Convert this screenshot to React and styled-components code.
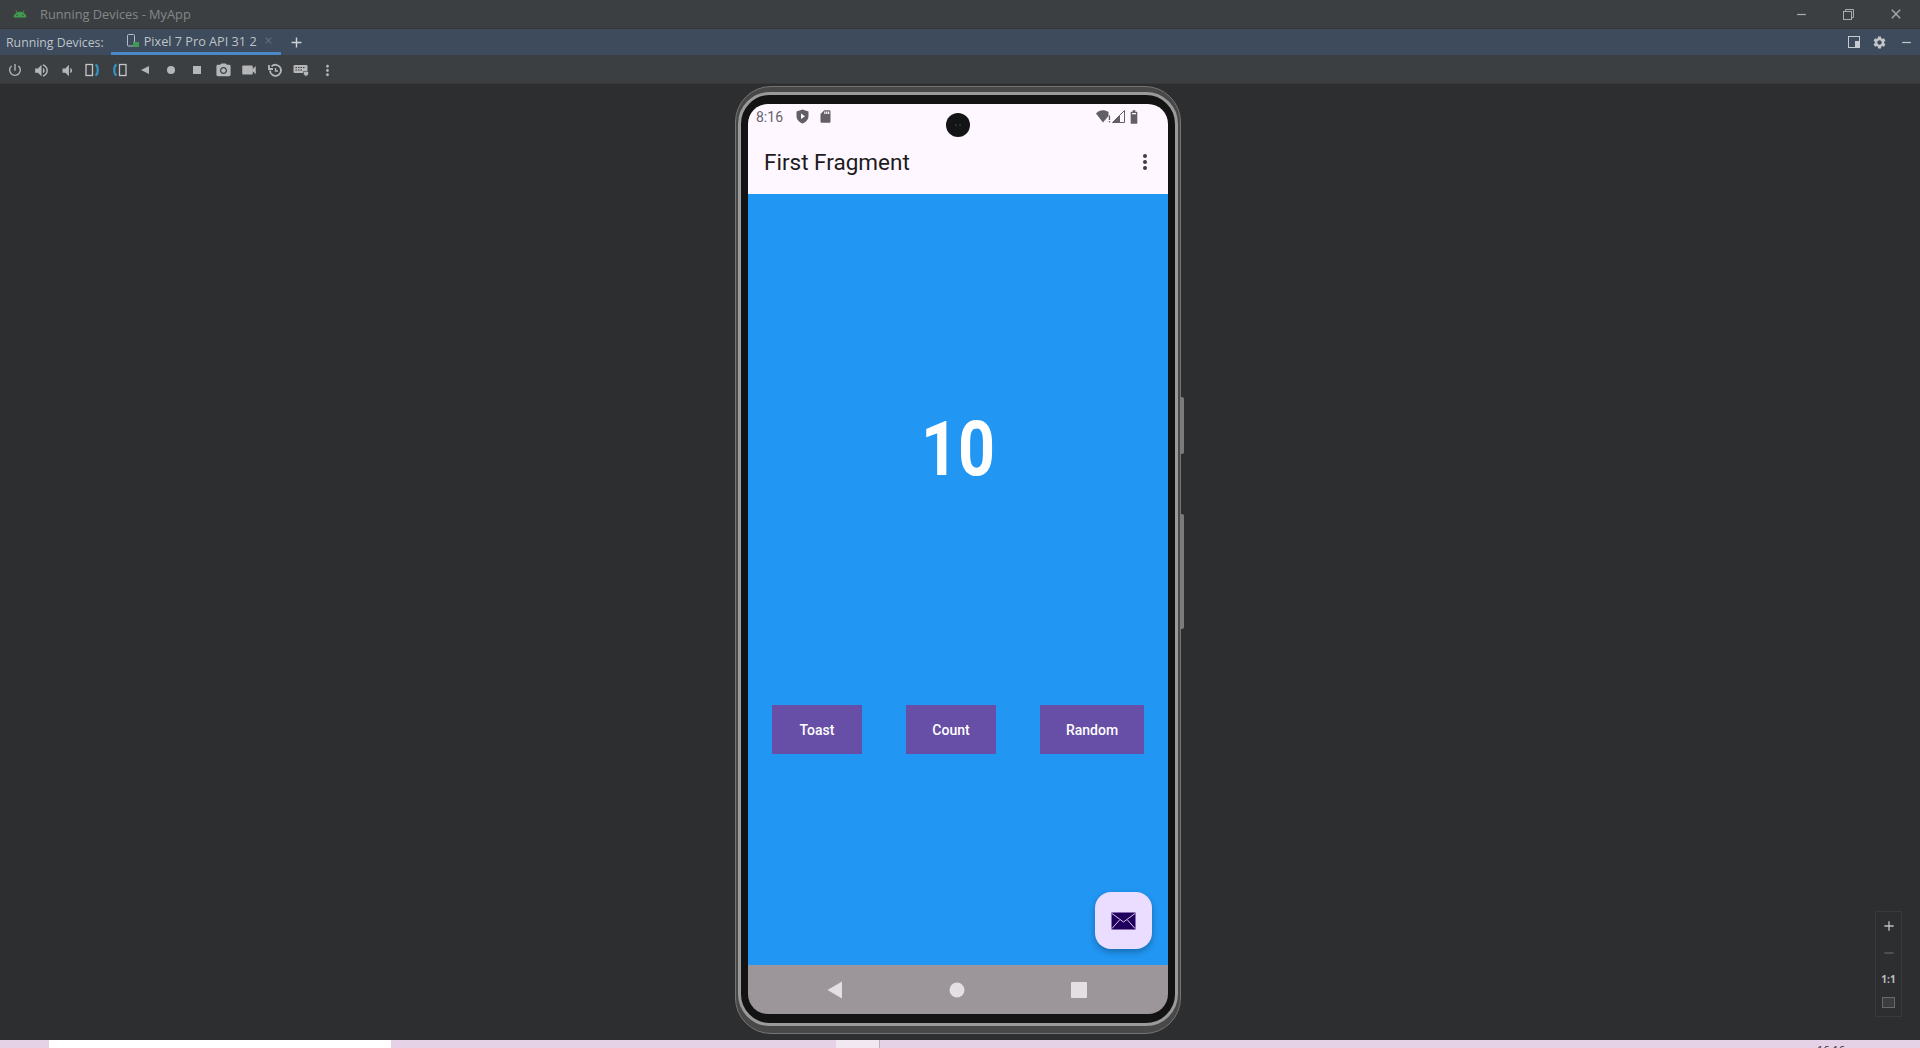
import React from 'react';
import styled, { createGlobalStyle } from 'styled-components';
import {
  MdPowerSettingsNew, MdVolumeUp, MdVolumeDown, MdPhotoCamera, MdVideocam, MdMoreVert,
  MdAndroid, MdAdd, MdSettings, MdClose, MdRemove, MdSdCard, MdBattery6Bar,
} from 'react-icons/md';

const GlobalStyle = createGlobalStyle`
  html, body { margin: 0; padding: 0; background: #2d2e2f; overflow: hidden; }
  * { box-sizing: border-box; }
`;

const Page = styled.div`
  width: 1920px;
  height: 1048px;
  display: flex;
  flex-direction: column;
  font-family: "Open Sans", "Liberation Sans", sans-serif;
  overflow: hidden;
`;

const TitleBar = styled.div`
  height: 29px;
  flex: none;
  display: flex;
  align-items: center;
  padding-left: 13px;
  background: #3c3f41;
  border-bottom: 1px solid #333537;
  color: #84878a;
  font-size: 12.8px;
`;

const TitleText = styled.span`
  margin-left: 13px;
`;

const WindowControls = styled.div`
  margin-left: auto;
  display: flex;
  align-items: center;
  gap: 34px;
  padding-right: 16px;
  color: #a9abad;
`;

const TabBar = styled.div`
  height: 26px;
  flex: none;
  display: flex;
  align-items: center;
  padding-left: 6px;
  background: #3d4b5c;
  color: #bfc3c7;
  font-size: 12.3px;
`;

const Tab = styled.div`
  height: 26px;
  width: 170px;
  margin-left: 7px;
  padding-left: 15px;
  display: flex;
  align-items: center;
  gap: 4px;
  white-space: nowrap;
  font-size: 12.7px;
  border-bottom: 3px solid #4a88c7;
`;

const TabClose = styled.span`
  display: flex;
  margin-left: 2px;
  color: #66707c;
`;

const TabAdd = styled.span`
  display: flex;
  margin-left: 7px;
  color: #d0d3d6;
`;

const TabActions = styled.div`
  margin-left: auto;
  display: flex;
  align-items: center;
  gap: 12px;
  padding-right: 6px;
  color: #c3c6c9;
`;

const Toolbar = styled.div`
  height: 29px;
  flex: none;
  display: flex;
  align-items: center;
  padding: 2px 0 0 2px;
  background: #3c3f41;
  border-bottom: 1px solid #36383a;
`;

const ToolButton = styled.span`
  width: 26px;
  height: 20px;
  display: flex;
  align-items: center;
  justify-content: center;
  color: #b4b6b8;
`;

const Stage = styled.div`
  flex: 1;
  position: relative;
  display: flex;
  justify-content: center;
  padding: 2px 4px 0 0;
  background: #2d2e2f;
`;

const Shell = styled.div`
  position: relative;
  width: 446px;
  height: 948px;
  padding: 5px 2px 7px;
  border: 1px solid #747474;
  border-radius: 36px;
  background: #484848;
`;

const Rim = styled.div`
  height: 100%;
  padding: 9px 7px;
  border: 3px solid #9a9a9a;
  border-radius: 32px;
  background: #131314;
`;

const SideKey = styled.div`
  position: absolute;
  left: 444px;
  top: ${(p) => p.$top}px;
  width: 4px;
  height: ${(p) => p.$height}px;
  border-radius: 0 2px 2px 0;
  background: #7b7b7b;
`;

const Screen = styled.div`
  position: relative;
  height: 100%;
  display: flex;
  flex-direction: column;
  border-radius: 20px;
  overflow: hidden;
  font-family: Roboto, "Liberation Sans", sans-serif;
`;

const StatusBar = styled.div`
  height: 27px;
  flex: none;
  display: flex;
  align-items: center;
  padding: 0 26px 2px 8px;
  background: #fef7ff;
  color: #66636a;
  font-size: 14px;
`;

const StatusIcons = styled.div`
  display: flex;
  align-items: center;
  gap: 9px;
  margin-left: 13px;
`;

const StatusRight = styled.div`
  margin-left: auto;
  display: flex;
  align-items: center;
  gap: 1px;
`;

const Camera = styled.div`
  position: absolute;
  left: 198px;
  top: 9px;
  width: 24px;
  height: 24px;
  display: flex;
  align-items: center;
  justify-content: center;
  gap: 2px;
  border-radius: 50%;
  background: #131416;
`;

const CameraDot = styled.span`
  width: 2px;
  height: 2px;
  border-radius: 50%;
  background: #35373a;
`;

const AppBar = styled.div`
  height: 63px;
  flex: none;
  display: flex;
  align-items: center;
  justify-content: space-between;
  padding: 0 20px 2px 16px;
  background: #fef7ff;
  color: #1d1b20;
  font-size: 22.5px;
`;

const Content = styled.div`
  position: relative;
  flex: 1;
  padding-top: 210px;
  background: #2196f3;
`;

const Counter = styled.div`
  color: #fff;
  font-size: 76px;
  font-weight: 700;
  line-height: 90px;
  text-align: center;
  transform: scaleX(0.85);
`;

const ButtonRow = styled.div`
  display: flex;
  gap: 44px;
  margin-top: 211px;
  padding-left: 24px;
`;

const ActionButton = styled.button`
  width: ${(p) => p.$width}px;
  height: 49px;
  border: 0;
  padding: 0;
  background: #674ea7;
  color: #fff;
  font-family: inherit;
  font-size: 14px;
  font-weight: 500;
`;

const Fab = styled.div`
  position: absolute;
  right: 16px;
  bottom: 16px;
  width: 57px;
  height: 57px;
  display: flex;
  align-items: center;
  justify-content: center;
  border-radius: 16px;
  background: #eaddff;
  box-shadow: 0 3px 6px rgba(0, 0, 0, 0.28);
`;

const NavBar = styled.div`
  height: 49px;
  flex: none;
  display: grid;
  grid-template-columns: 95px 228px 97px;
  align-items: center;
  background: #9c9599;
  padding-top: 1px;
`;

const NavSlot = styled.div`
  display: flex;
  justify-content: ${(p) => p.$justify};
`;

const ZoomPanel = styled.div`
  position: absolute;
  left: 1875px;
  top: 827px;
  width: 27px;
  height: 106px;
  display: flex;
  flex-direction: column;
  align-items: center;
  justify-content: space-around;
  padding: 1px 0 3px;
  border: 1px solid #37393b;
  color: #bdbfc1;
  font-size: 10px;
  font-weight: 700;
`;

const ZoomImage = styled.span`
  width: 13px;
  height: 11px;
  border: 1px solid #68696b;
  background: #3c3d3f;
`;

const ZoomMinus = styled.span`
  display: flex;
  color: #5d5f61;
`;

const BottomStrip = styled.div`
  position: relative;
  height: 8px;
  flex: none;
  display: flex;
  background: #e6d2e6;
  overflow: hidden;
`;

const StripPart = styled.div`
  width: ${(p) => p.$width}px;
  background: ${(p) => p.$bg};
  border-right: ${(p) => (p.$edge ? '1px solid #bfb0bf' : '0')};
`;

const StripClock = styled.span`
  position: absolute;
  left: 1817px;
  top: 4px;
  color: #333;
  font-size: 11px;
  line-height: 11px;
`;

const TabDeviceIcon = () => (
  <svg width="14" height="14" viewBox="0 0 14 14" fill="none">
    <rect x="1.5" y="0.5" width="7" height="11.5" rx="1" stroke="#b8bcc0" />
    <rect x="7" y="8" width="6" height="5" fill="#3f9b4f" />
  </svg>
);

const RestoreIcon = () => (
  <svg width="11" height="11" viewBox="0 0 11 11" fill="none" stroke="#a9abad">
    <rect x="0.5" y="2.5" width="8" height="8" />
    <path d="M2.5 2.5V0.5H10.5V8.5H8.5" />
  </svg>
);

const SplitIcon = () => (
  <svg width="12" height="12" viewBox="0 0 12 12">
    <rect x="0.5" y="0.5" width="11" height="11" fill="none" stroke="#c8cbce" />
    <rect x="7" y="5" width="4" height="6" fill="#c8cbce" />
  </svg>
);

const RotateIcon = ({ flip }) => (
  <svg width="16" height="14" viewBox="0 0 16 14" fill="none" style={flip ? { transform: 'scaleX(-1)' } : undefined}>
    <rect x="1" y="1.5" width="6.500" height="11" stroke="#c4c6c8" strokeWidth="1.300" />
    <path d="M10.500 1.500c3 1.500 3 9.500 0 11" stroke="#3592c4" strokeWidth="2.200" />
  </svg>
);

const BackIcon = () => (
  <svg width="12" height="12" viewBox="0 0 12 12"><path d="M10 2v8L2 6z" fill="#b4b6b8" /></svg>
);

const DotIcon = () => (
  <svg width="12" height="12" viewBox="0 0 12 12"><circle cx="6" cy="6" r="4" fill="#b4b6b8" /></svg>
);

const SquareIcon = () => (
  <svg width="12" height="12" viewBox="0 0 12 12"><rect x="2" y="2" width="8" height="8" fill="#b4b6b8" /></svg>
);

const SnapshotIcon = () => (
  <svg width="15" height="15" viewBox="0 0 15 15" fill="none" stroke="#b4b6b8" strokeWidth="1.8">
    <path d="M3.500 3.500A5.500 5.500 0 1 1 2 7.500" />
    <path d="M1 2v4h4" />
    <path d="M7.500 5v3h2.500" strokeWidth="1.400" />
  </svg>
);

const KeyboardIcon = () => (
  <svg width="16" height="14" viewBox="0 0 16 14">
    <rect x="0.500" y="2" width="14" height="8" rx="1" fill="#b4b6b8" />
    <path d="M2.500 4.500h10M2.500 7h7" stroke="#3c3f41" strokeDasharray="1.500 1" />
    <path d="M10.500 8.500h5v3l-2.500 2-2.500-2z" fill="#b4b6b8" stroke="#3c3f41" strokeWidth="0.600" />
  </svg>
);

const ShieldPlayIcon = () => (
  <svg width="13" height="15" viewBox="0 0 13 15">
    <path d="M6.500 0.500 12.500 2.500V7c0 3.500-2.500 6.200-6 7.500C3 13.200 0.500 10.500 0.500 7V2.500z" fill="#625f66" />
    <path d="M5 4.500 9 7.300 5 10z" fill="#fef7ff" />
  </svg>
);

const WifiIcon = () => (
  <svg width="15" height="13" viewBox="0 0 15 13">
    <path d="M0 3.500C3.500-.5 8.500-.5 12.500 2V6L7 12.500z" fill="#625f66" />
    <rect x="12.800" y="5.500" width="1.300" height="4.500" fill="#625f66" />
    <rect x="12.800" y="11" width="1.300" height="1.400" fill="#625f66" />
  </svg>
);

const SignalIcon = () => (
  <svg width="13" height="13" viewBox="0 0 13 13">
    <path d="M12.500 0.500V12.500H0.500z" fill="none" stroke="#625f66" />
    <path d="M8 5 V12.500H0.500z" fill="#625f66" />
  </svg>
);

const KebabIcon = () => (
  <svg width="6" height="18" viewBox="0 0 6 18" fill="#3f3c44">
    <circle cx="3" cy="3" r="2" />
    <circle cx="3" cy="9" r="2" />
    <circle cx="3" cy="15" r="2" />
  </svg>
);

const MailIcon = () => (
  <svg width="25" height="18" viewBox="0 0 25 18">
    <rect x="0.500" y="0.500" width="24" height="17" fill="#21005d" />
    <path d="M1 1.500 12.500 10 24 1.500M1 16.500l7.500-8.500M24 16.500 16.500 8" fill="none" stroke="#eaddff" strokeWidth="0.900" />
  </svg>
);

const NavBack = () => (
  <svg width="16" height="18" viewBox="0 0 16 18"><path d="M15 0.500V17.500L0.500 9z" fill="#e3dfe3" /></svg>
);

const NavHome = () => (
  <svg width="16" height="16" viewBox="0 0 16 16"><circle cx="8" cy="8" r="7.500" fill="#e3dfe3" /></svg>
);

const NavRecent = () => (
  <svg width="16" height="16" viewBox="0 0 16 16"><rect width="16" height="16" rx="1" fill="#e3dfe3" /></svg>
);

const tools = [
  <MdPowerSettingsNew size={16} />,
  <MdVolumeUp size={17} />,
  <MdVolumeDown size={17} />,
  <RotateIcon />,
  <RotateIcon flip />,
  <BackIcon />,
  <DotIcon />,
  <SquareIcon />,
  <MdPhotoCamera size={17} />,
  <MdVideocam size={18} />,
  <SnapshotIcon />,
  <KeyboardIcon />,
  <MdMoreVert size={17} />,
];

const App = () => (
  <Page>
    <GlobalStyle />

    <TitleBar>
      <MdAndroid size={14} color="#3f9b4f" />
      <TitleText>Running Devices - MyApp</TitleText>
      <WindowControls>
        <MdRemove size={15} />
        <RestoreIcon />
        <MdClose size={16} />
      </WindowControls>
    </TitleBar>

    <TabBar>
      Running Devices:
      <Tab>
        <TabDeviceIcon />
        Pixel 7 Pro API 31 2
        <TabClose><MdClose size={11} /></TabClose>
      </Tab>
      <TabAdd><MdAdd size={17} /></TabAdd>
      <TabActions>
        <SplitIcon />
        <MdSettings size={15} />
        <MdRemove size={15} />
      </TabActions>
    </TabBar>

    <Toolbar>
      {tools.map((icon, i) => <ToolButton key={i}>{icon}</ToolButton>)}
    </Toolbar>

    <Stage>
      <Shell>
        <SideKey $top={310} $height={57} />
        <SideKey $top={427} $height={115} />
        <Rim>
          <Screen>
            <StatusBar>
              8:16
              <StatusIcons>
                <ShieldPlayIcon />
                <MdSdCard size={15} color="#625f66" />
              </StatusIcons>
              <StatusRight>
                <WifiIcon />
                <SignalIcon />
                <MdBattery6Bar size={16} color="#625f66" />
              </StatusRight>
            </StatusBar>
            <Camera>
              <CameraDot />
              <CameraDot />
            </Camera>
            <AppBar>
              First Fragment
              <KebabIcon />
            </AppBar>
            <Content>
              <Counter>10</Counter>
              <ButtonRow>
                <ActionButton $width={90}>Toast</ActionButton>
                <ActionButton $width={90}>Count</ActionButton>
                <ActionButton $width={104}>Random</ActionButton>
              </ButtonRow>
              <Fab><MailIcon /></Fab>
            </Content>
            <NavBar>
              <NavSlot $justify="flex-end"><NavBack /></NavSlot>
              <NavSlot $justify="center"><NavHome /></NavSlot>
              <NavSlot $justify="flex-start"><NavRecent /></NavSlot>
            </NavBar>
          </Screen>
        </Rim>
      </Shell>

      <ZoomPanel>
        <MdAdd size={16} />
        <ZoomMinus><MdRemove size={16} /></ZoomMinus>
        <span>1:1</span>
        <ZoomImage />
      </ZoomPanel>
    </Stage>

    <BottomStrip>
      <StripPart $width={49} $bg="#e6d2e6" />
      <StripPart $width={342} $bg="#ffffff" />
      <StripPart $width={445} $bg="#e6d2e6" />
      <StripPart $width={44} $bg="#f2e8f2" $edge />
      <StripClock>16:16</StripClock>
    </BottomStrip>
  </Page>
);

export default App;
